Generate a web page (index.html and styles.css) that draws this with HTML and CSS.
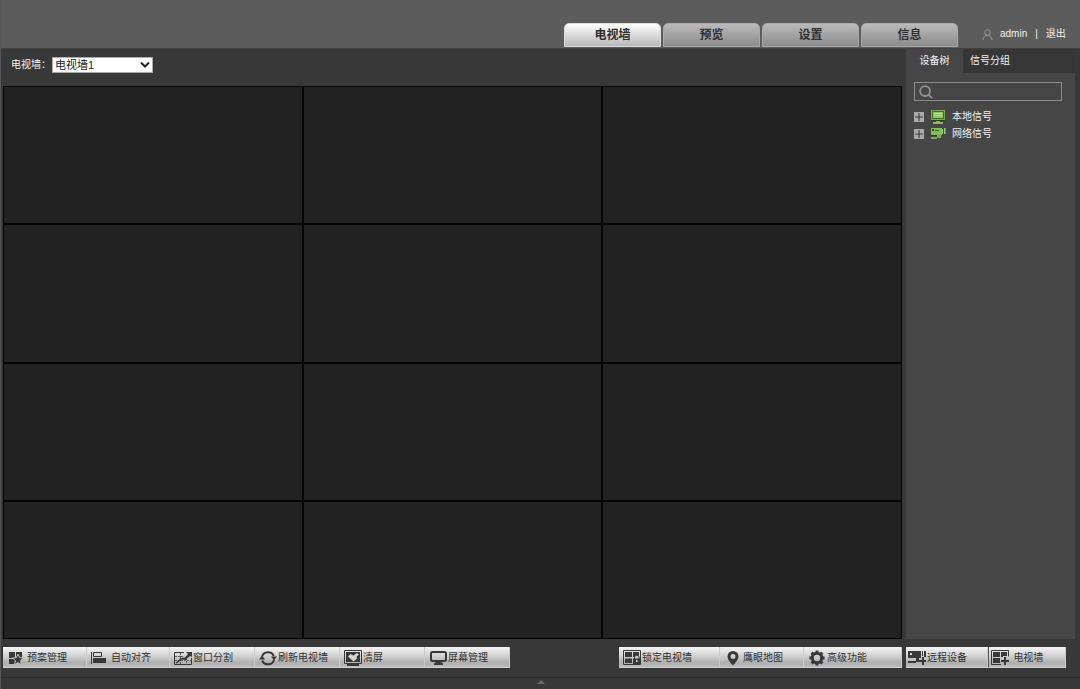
FILE: index.html
```html
<!DOCTYPE html>
<html lang="zh-CN">
<head>
<meta charset="utf-8">
<title>电视墙</title>
<link rel="stylesheet" href="styles.css">
</head>
<body>
<div class="app">
  <header class="header">
    <nav class="main-nav">
      <button class="nav-tab active" type="button">电视墙</button>
      <button class="nav-tab" type="button">预览</button>
      <button class="nav-tab" type="button">设置</button>
      <button class="nav-tab" type="button">信息</button>
    </nav>
    <div class="user">
      <svg class="user-icon" viewBox="0 0 11 11"><circle cx="5.5" cy="3.5" r="2.8"/><path d="M1 11c0-3 2-4.500 4.500-4.500S10 8 10 11"/></svg>
      <span>admin</span>
      <span>|</span>
      <a class="logout" href="#">退出</a>
    </div>
  </header>
  <main class="workspace">
    <section class="wall-panel">
      <div class="wall-bar">
        <label for="wall">电视墙：</label>
        <span class="select-box">
          <select id="wall"><option>电视墙1</option></select>
          <svg class="chevron" viewBox="0 0 10 6"><path d="M1 0.500L5 4.500L9 0.500"/></svg>
        </span>
      </div>
      <div class="wall">
        <div class="screen"></div><div class="screen"></div><div class="screen"></div>
        <div class="screen"></div><div class="screen"></div><div class="screen"></div>
        <div class="screen"></div><div class="screen"></div><div class="screen"></div>
        <div class="screen"></div><div class="screen"></div><div class="screen"></div>
      </div>
    </section>
    <aside class="sidebar">
      <div class="side-tabs">
        <button class="side-tab active" type="button">设备树</button>
        <button class="side-tab" type="button">信号分组</button>
      </div>
      <div class="side-body">
        <div class="search">
          <svg class="search-icon" viewBox="0 0 15 15"><circle cx="6.500" cy="6.500" r="5.300"/><path d="M10.500 10.500L14 14"/></svg>
          <input type="text" aria-label="搜索">
        </div>
        <ul class="tree">
          <li>
            <button class="expander" type="button" aria-label="展开本地信号"><svg viewBox="0 0 9 9"><path d="M4.500 1v7M1 4.500h7"/></svg></button>
            <svg class="tree-icon" viewBox="0 0 16 14"><path d="M1 0h14v10H1z" fill="#79ab55"/><path d="M2 1h12v8H2z" fill="#436b30"/><path d="M3 2h10v6H3z" fill="#8fc865"/><path d="M4 3h8v1H4zM4 5h8v1H4z" fill="#b5df91"/><path d="M1 10h14v1H1z" fill="#294120"/><path d="M6 11h4v1h3v2H3v-2h3z" fill="#84ba5d"/></svg>
            <span>本地信号</span>
          </li>
          <li>
            <button class="expander" type="button" aria-label="展开网络信号"><svg viewBox="0 0 9 9"><path d="M4.500 1v7M1 4.500h7"/></svg></button>
            <svg class="tree-icon" viewBox="0 0 16 14"><path d="M1 1h11v7H1z" fill="#83bd59"/><path d="M2 2h2v2H2zM5 3h4v1H5z" fill="#36562a"/><path d="M12 2h1v5h-1zM14 1h1.500v6H14z" fill="#9bd070"/><path d="M7 8h4v3H7v1H1v-2h6z" fill="#78ac50"/><path d="M1 8h6v1H1z" fill="#294120"/></svg>
            <span>网络信号</span>
          </li>
        </ul>
      </div>
    </aside>
    <div class="toolbar">
      <div class="tool-group main-tools">
        <button class="tool" type="button"><svg class="icon" viewBox="0 0 18 16"><path d="M3 2h6v6H3zM10 2h6v6h-6zM3 9h6v5H3z"/><path class="star" d="M12 4l1.600 3.600 3.900.4-2.900 2.600.8 4-3.400-2-3.400 2 .8-4L6.500 8l3.900-.4z"/></svg>预案管理</button>
        <button class="tool spaced" type="button"><svg class="icon" viewBox="0 0 18 16"><path d="M2 2h1v12H2zM4 8h13v5H4z"/><path class="line" d="M4.500 2.500h8v4h-8z"/></svg>自动对齐</button>
        <button class="tool" type="button"><svg class="icon" viewBox="0 0 18 16"><path class="line" d="M10 2.500H.500v12h17V8"/><path class="thin" d="M6.500 3v12M12.500 8v7M1 6.500h8M1 10.500h17" stroke-dasharray="2 1"/><path d="M12 2h6v5l-2-1-4.500 4-4-.5L3 13.500 1.500 13l5-5 4.500-.5L14 4z"/></svg>窗口分割</button>
        <button class="tool" type="button"><svg class="icon" viewBox="0 0 18 16"><path class="arc" d="M3 6.500A6.300 6.300 0 0 1 14.800 6M15 10A6.300 6.300 0 0 1 3.200 10.500"/><path d="M12 6.500h6L15 10.500zM0 9.500L3 5.500l3.200 4z"/></svg>刷新电视墙</button>
        <button class="tool" type="button"><svg class="icon" viewBox="0 0 18 16"><path class="line" d="M.5.5h17v13H.5z"/><path d="M2 2h14v10H2zM3 14h12v2H3z"/><path class="light" d="M9.500 5.500L13 3l2 1.500-2.500 2.200.5 1.800-3.500 3L4 6.500 6.500 4 8 5z"/></svg>清屏</button>
        <button class="tool" type="button"><svg class="icon" viewBox="0 0 18 16"><rect class="thick" x="2" y="2" width="15" height="9" rx="1.500"/><path d="M7 12h5l2 1.500V15H5v-1.500z"/></svg>屏幕管理</button>
      </div>
      <div class="tool-group wall-tools">
        <button class="tool wide" type="button"><svg class="icon" viewBox="0 0 18 16"><path class="line" d="M.5.5h17v14H.5z"/><path d="M2 2h7v5H2zM10 2h6v3.500h-4V7h-2zM2 8.500h7V13H2zM10 8.500h7V14h-7z"/><path class="line" d="M11.500 9V7.500a2.300 2.300 0 0 1 4.600 0V9"/><path class="light" d="M13 10h1.500v2H13z"/></svg>锁定电视墙</button>
        <button class="tool" type="button"><svg class="icon" viewBox="0 0 18 16"><path fill-rule="evenodd" d="M9 1a5.500 5.500 0 0 0-5.500 5.500C3.500 10 9 15.500 9 15.500s5.500-5.500 5.500-9A5.500 5.500 0 0 0 9 1zm0 3a2.500 2.500 0 1 1 0 5 2.500 2.500 0 0 1 0-5z"/></svg>鹰眼地图</button>
        <button class="tool wide" type="button"><svg class="icon" viewBox="0 0 18 16"><circle class="gear" cx="9" cy="8" r="4.700"/><path class="gear" d="M9 .4v2.500M9 13.100v2.500M1.400 8h2.500M14.100 8h2.500M3.600 2.600l1.800 1.800M12.600 11.600l1.800 1.800M14.400 2.600l-1.800 1.800M5.400 11.600l-1.800 1.800"/></svg>高级功能</button>
      </div>
    </div>
    <div class="tool-group side-tools">
      <button class="tool" type="button"><svg class="icon" viewBox="0 0 18 16"><path fill-rule="evenodd" d="M0 1h13v7H0zM2 3v2h2V3zM14 1h1v5h-1zM16 1h2v6h-2zM8 8h3v4H8v1H0v-2h8zM14 7h2v3h2v2h-2v3h-2v-3h-3v-2h3z"/></svg>远程设备</button>
      <button class="tool spaced" type="button"><svg class="icon" viewBox="0 0 18 16"><path class="line" d="M10 14.500H.5V.5h17v6"/><path d="M2 2h7v5H2zM10 2h6v4h-4v1h-2zM2 8h7v5H2zM13 7h2v3h3v2h-3v3h-2v-3h-3v-2h3z"/></svg>电视墙</button>
    </div>
  </main>
  <footer class="footer"><button class="drawer" type="button" aria-label="展开"></button></footer>
</div>
</body>
</html>
```
FILE: styles.css
```css
* { box-sizing: border-box; }

body {
  margin: 0;
  background: #383838;
  color: #f2f2f2;
  font: 10px/16px "Liberation Sans", "Noto Sans CJK SC", sans-serif;
}

button, input, select { font: inherit; color: inherit; }
button { border: 0; padding: 0; background: none; }
svg { display: block; flex: none; }

.app {
  min-height: 100vh;
  display: flex;
  flex-direction: column;
  border-left: 1px solid #55555a;
}

.header {
  height: 49px;
  display: flex;
  justify-content: flex-end;
  align-items: flex-end;
  background: #5c5c5c;
  border-bottom: 1px solid #404040;
}

.main-nav { display: flex; gap: 2px; padding-bottom: 1px; }

.nav-tab {
  width: 97px;
  height: 24px;
  border: 1px solid #aaa;
  border-radius: 5px 5px 0 0;
  background: linear-gradient(#bababa, #8c8c8c);
  color: #303030;
  font-size: 12px;
  font-weight: bold;
}

.nav-tab.active { background: linear-gradient(#fff, #b8b8b8); border-color: #ddd; }

.user {
  width: 122px;
  height: 28px;
  padding-left: 24px;
  display: flex;
  align-items: center;
  gap: 8px;
  white-space: nowrap;
}

.user-icon { width: 11px; height: 11px; margin-right: -1px; fill: none; stroke: #999; }
.logout { color: inherit; text-decoration: none; }

.workspace {
  flex: 1;
  display: grid;
  grid-template-columns: minmax(0, 1fr) 169px;
  grid-template-rows: 1fr 21px;
  gap: 8px 4px;
  padding: 0 5px 9px 2px;
}

.wall-panel { display: flex; flex-direction: column; }

.wall-bar {
  height: 37px;
  padding: 0 0 5px 8px;
  display: flex;
  align-items: center;
}

.wall-bar label { width: 41px; white-space: nowrap; }
.select-box { position: relative; }

.select-box select {
  display: block;
  width: 101px;
  height: 16px;
  padding: 0 2px;
  border: 1px solid #aaa;
  border-radius: 0;
  appearance: none;
  background: #fff;
  color: #222;
  font-size: 11px;
  line-height: 14px;
}

.chevron {
  position: absolute;
  right: 3px;
  top: 5px;
  width: 10px;
  height: 6px;
  fill: none;
  stroke: #222;
  stroke-width: 2;
  pointer-events: none;
}

.wall {
  flex: 1;
  display: grid;
  grid-template: repeat(4, 1fr) / repeat(3, 1fr);
  gap: 2px;
  padding: 1px;
  background: #050505;
}

.screen { background: #222; }

.sidebar { display: flex; flex-direction: column; }
.side-tabs { height: 24px; display: flex; background: #363636; }
.side-tab { width: 54px; padding-bottom: 1px; white-space: nowrap; }
.side-tab.active { width: 57px; background: #464646; }
.side-body { flex: 1; padding: 9px 13px 8px 8px; background: #464646; }

.search {
  height: 19px;
  display: flex;
  align-items: center;
  gap: 4px;
  padding-left: 4px;
  border: 1px solid #8a8a8a;
}

.search input { flex: 1; min-width: 0; height: 16px; padding: 0; border: 0; outline: 0; background: none; }
.search-icon { width: 14px; height: 14px; fill: none; stroke: #929292; stroke-width: 2; }

.tree { list-style: none; margin: 7px 0 0; padding: 0; }
.tree li { height: 17px; display: flex; align-items: center; }
.expander { width: 10px; height: 10px; margin-right: 6px; background: #aaa; }
.expander svg { width: 10px; height: 10px; stroke: #3c3c3c; }
.tree-icon { width: 16px; height: 14px; margin-right: 6px; }

.toolbar { display: flex; justify-content: space-between; }
.tool-group { display: flex; height: 21px; }
.main-tools { width: 507px; }
.main-tools .tool { flex: 1; }
.side-tools { width: 160px; }
.side-tools .tool { flex: 83; }
.side-tools .tool.spaced { flex: 77; border-left: 1px solid #555; }

.tool {
  width: 84px;
  display: flex;
  align-items: center;
  gap: 1px;
  padding: 1px 0 0 4px;
  border-right: 1px solid #ccc;
  border-bottom: 1px solid #d0d0d0;
  background: linear-gradient(#f5f5f5, #ccc 50%, #b0b0b0 78%, #bababa);
  color: #303030;
  white-space: nowrap;
}

.wall-tools .wide { width: 101px; }
.wall-tools .wide:last-child { width: 98px; }
.main-tools .tool:first-child { gap: 3px; padding-left: 3px; }
.tool.spaced { gap: 4px; padding-left: 2px; }
.side-tools .tool { padding-left: 2px; }

.icon { width: 18px; height: 16px; margin-top: 1px; fill: #383838; }
.line { fill: none; stroke: #383838; }
.thin { fill: none; stroke: #555; }
.thick, .arc { fill: none; stroke: #383838; stroke-width: 2; }
.light { fill: #d5d5d5; }
.star { stroke: #c4c4c4; }
.gear { fill: none; stroke: #383838; stroke-width: 3; }

.footer {
  height: 12px;
  display: flex;
  justify-content: center;
  align-items: flex-start;
  padding-top: 2px;
  border-top: 1px solid #2b2b2b;
}

.drawer {
  border: 4px solid transparent;
  border-top: 0;
  border-bottom-color: #686868;
}
```
